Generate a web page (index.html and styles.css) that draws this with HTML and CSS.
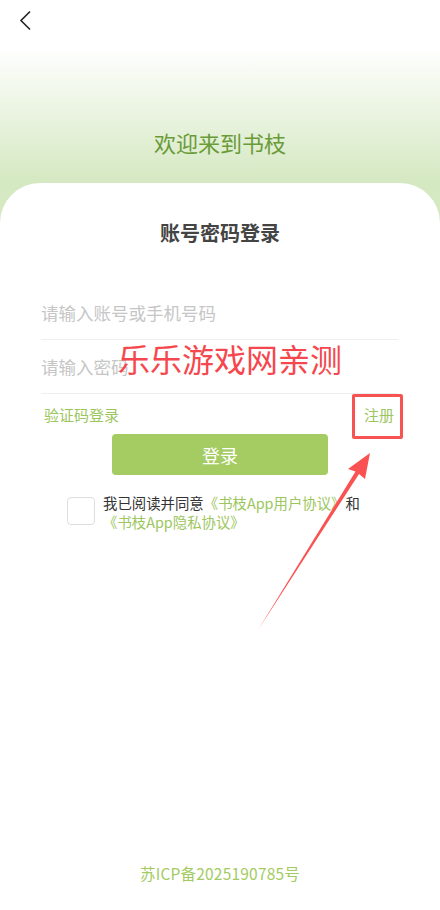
FILE: index.html
```html
<!DOCTYPE html>
<html lang="zh-CN">
  <head>
    <meta charset="UTF-8" />
    <meta name="viewport" content="width=device-width, initial-scale=1.0" />
    <title>书枝 - 登录</title>
    <link rel="stylesheet" href="styles.css">
  </head>
  <body>
    <div class="page">
      <div class="top">
        <div class="nav">
          <svg class="back" width="14" height="22" viewBox="0 0 14 22">
            <path d="M11 1.5 L2 10.5 L11 19.5" fill="none" stroke="#222" stroke-width="1.6" />
          </svg>
        </div>
        <h1 class="welcome">欢迎来到书枝</h1>
      </div>

      <div class="card">
        <h2 class="card-title">账号密码登录</h2>

        <form class="login-form">
          <div class="field">
            <input type="text" placeholder="请输入账号或手机号码" />
          </div>
          <div class="field">
            <input type="password" placeholder="请输入密码" />
          </div>

          <div class="links">
            <a href="#">验证码登录</a>
            <a href="#">注册</a>
          </div>

          <button type="button" class="login-button">登录</button>
        </form>

        <div class="agree">
          <span class="check"></span>
          <p>
            我已阅读并同意<a href="#">《书枝App用户协议》</a>和
            <a href="#">《书枝App隐私协议》</a>
          </p>
        </div>

        <div class="icp">苏ICP备2025190785号</div>
      </div>

      <!-- 标注 -->
      <div class="mark-text">乐乐游戏网亲测</div>
      <div class="mark-box"></div>
      <svg class="mark-arrow" width="440" height="910" viewBox="0 0 440 910">
        <path d="M258 630 L355.5 471.5 L348 469 L370 453 L365 479 L359 474 Z" fill="#fa5252" />
      </svg>
    </div>
  </body>
</html>
```

FILE: styles.css
```css
* {
  box-sizing: border-box;
}
body {
  margin: 0;
  padding: 0;
  background: #fff;
  font-family: "Noto Sans CJK SC", "Noto Sans", sans-serif;
}
.page {
  position: relative;
  width: 440px;
  height: 910px;
  overflow: hidden;
  display: flex;
  flex-direction: column;
}
.top {
  background: linear-gradient(#fff 47px, #d4e8c1 183px);
  padding-bottom: 66px;
}
.nav {
  height: 45px;
  padding: 10px 0 0 19px;
}
.back {
  display: block;
}
.welcome {
  margin: 82px 0 0;
  text-align: center;
  font-size: 22px;
  line-height: 30px;
  font-weight: normal;
  color: #6a9b38;
}
.card {
  flex: 1;
  margin-top: -40px;
  background: #fff;
  border-radius: 40px 40px 0 0;
  padding: 36px 0 27px;
  display: flex;
  flex-direction: column;
}
.card-title {
  margin: 0;
  text-align: center;
  font-size: 20px;
  line-height: 28px;
  font-weight: bold;
  color: #444;
}
.login-form {
  display: flex;
  flex-direction: column;
  margin-top: 39px;
}
.field {
  margin: 0 42px 0 41px;
  height: 54px;
  border-bottom: 1px solid #eeeeee;
  display: flex;
  align-items: center;
}
.field input {
  border: none;
  outline: none;
  padding: 0;
  width: 100%;
  font-family: inherit;
  font-size: 17.5px;
  color: #333;
  background: transparent;
}
.field input::placeholder {
  color: #c6c6c6;
}
.links {
  height: 40px;
  padding: 0 46px 0 44px;
  display: flex;
  justify-content: space-between;
  align-items: center;
}
.links a {
  font-size: 15px;
  color: #9cc65e;
  text-decoration: none;
}
.login-button {
  align-self: center;
  width: 216px;
  height: 41px;
  border: none;
  border-radius: 4px;
  background: #a4cc63;
  color: #fff;
  font-family: inherit;
  font-size: 18px;
  cursor: pointer;
}
.agree {
  margin-top: 18px;
  display: flex;
  justify-content: center;
  gap: 8px;
}
.check {
  flex: none;
  width: 28px;
  height: 28px;
  margin-top: 4px;
  border: 1px solid #dddddd;
  border-radius: 4px;
}
.agree p {
  margin: 0;
  width: 270px;
  font-size: 14.4px;
  line-height: 19px;
  color: #333;
}
.agree a {
  color: #9cc65e;
  text-decoration: none;
}
.icp {
  margin-top: auto;
  text-align: center;
  font-size: 15.5px;
  letter-spacing: 0.2px;
  line-height: 20px;
  color: #a3cb62;
}
.mark-text {
  position: absolute;
  left: 118px;
  top: 338px;
  font-size: 32px;
  line-height: 40px;
  color: #f5474d;
  white-space: nowrap;
}
.mark-box {
  position: absolute;
  left: 352px;
  top: 394px;
  width: 51px;
  height: 45px;
  border: 3px solid #f75353;
  border-radius: 2px;
}
.mark-arrow {
  position: absolute;
  left: 0;
  top: 0;
  pointer-events: none;
}
```
